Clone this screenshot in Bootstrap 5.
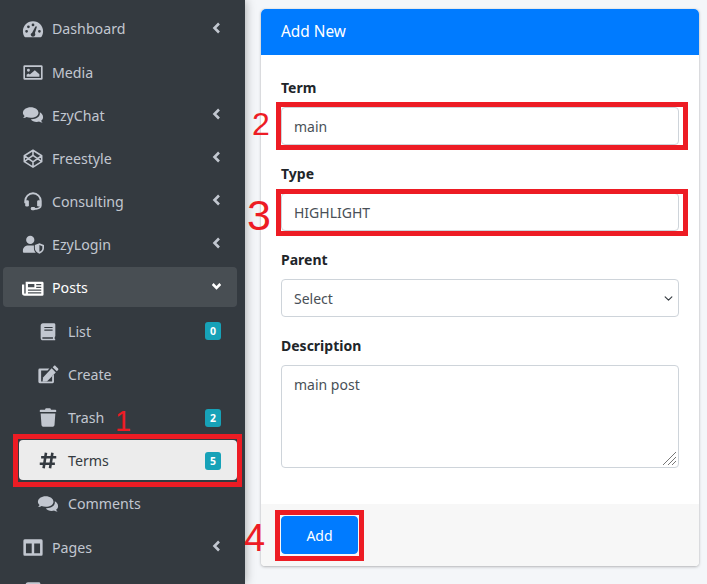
<!DOCTYPE html>
<html lang="en">
<head>
    <meta charset="UTF-8">
    <meta name="viewport" content="width=device-width, initial-scale=1">
    <title>Terms - Add New</title>
    <link href="https://cdn.jsdelivr.net/npm/bootstrap@5.3.0/dist/css/bootstrap.min.css" rel="stylesheet">
    <style>
        html, body { height: 584px; overflow: hidden; }
        body { background: #f4f6f9; font-family: "Noto Sans", "Liberation Sans", sans-serif; font-size: 14px; color: #212529; }
        .page-wrap { height: 584px; overflow: hidden; }

        /* sidebar */
        .side-bar { width: 245px; flex: none; background: #343a40; padding: 8px 8px 0 3px; box-shadow: 0 0 10px rgba(0,0,0,.35); height: 584px; overflow: hidden; z-index: 1; }
        .side-link { height: 40px; margin-bottom: 3.2px; padding: 2px 16px 0 17px; color: #c2c7d0; border-radius: 4px; font-size: 14.2px; }
        .side-link:hover { color: #c2c7d0; }
        .side-link.is-open { background: rgba(255,255,255,.1); color: #fff; }
        .side-link.is-sub { margin-left: 16px; }
        .side-link.is-current { background: #ececec; color: #343a40; }
        .side-ico { width: 22px; height: 19px; flex: none; margin-left: 2px; margin-right: 8px; fill: currentColor; }
        .is-sub .side-ico { margin-left: 1px; margin-right: 9px; }
        .side-arrow { width: 9px; height: 12px; flex: none; fill: none; stroke: currentColor; stroke-width: 2.6; margin-left: auto; margin-top: -3px; }
        .side-count { margin-left: auto; background: #17a2b8; color: #fff; font-size: 10.5px; font-weight: 700; width: 16px; height: 18px; padding: 0; line-height: 18px; border-radius: 3px; text-align: center; }

        /* form card */
        .main-area { padding: 9px 8px 0 16px; min-width: 0; }
        .form-box { border: 0; border-radius: 4px; box-shadow: 0 0 1px rgba(0,0,0,.2), 0 1px 3px rgba(0,0,0,.25); height: 557px; }
        .form-box .card-header { background: #007bff; color: #fff; height: 46px; padding: 0 20px; font-size: 15.4px; line-height: 46px; border: 0; }
        .form-box .card-body { padding: 20px; }
        .form-box .form-label { font-weight: 700; font-size: 14px; line-height: 23px; padding-top: 1px; margin-bottom: 8px; display: block; }
        .form-box .form-control, .form-box .form-select { font-size: 14px; color: #495057; height: 38px; border-color: #ced4da; border-radius: 4px; line-height: 24px; }
        .form-box .form-select, .form-box textarea.form-control { padding-top: 7px; padding-bottom: 5px; }
        .form-box .form-select { background-position: right 4px center; background-size: 11px 9px; }
        .form-box textarea.form-control { height: 103px; resize: none; background: url("data:image/svg+xml,%3Csvg xmlns='http://www.w3.org/2000/svg' width='14' height='14'%3E%3Cpath d='M1 14 14 1M6 14 14 6M10 14 14 10' stroke='%23777' stroke-width='1'/%3E%3C/svg%3E") no-repeat right 2px bottom 2px #fff; }
        .form-box .card-footer { background: #f7f7f7; border: 0; padding: 12px 20px; height: 62px; border-radius: 0 0 4px 4px; }
        .add-btn { background: #007bff; border-color: #007bff; font-size: 14px; padding: 0; height: 38px; width: 77px; border-radius: 4px; }

        /* red marks laid over the shot */
        .red-box { position: absolute; border: 5px solid #ed1c24; pointer-events: none; z-index: 2; }
        .box-terms { left: 13px; top: 434px; width: 229px; height: 53px; }
        .box-term { left: 276px; top: 102px; width: 412px; height: 48px; }
        .box-type { left: 276px; top: 189px; width: 412px; height: 47px; }
        .box-add { left: 275px; top: 510px; width: 89px; height: 51px; }
        .red-num { position: absolute; color: #ed1c24; font-family: "Liberation Sans", sans-serif; line-height: 1; z-index: 2; }
        .num-1 { left: 115px; top: 407px; font-size: 29px; }
        .num-2 { left: 252px; top: 108px; font-size: 32px; }
        .num-3 { left: 247px; top: 194px; font-size: 43px; }
        .num-4 { left: 244px; top: 519px; font-size: 38px; }
    </style>
</head>
<body>
<svg width="0" height="0" class="position-absolute">
    <symbol id="i-gauge" viewBox="0 0 24 20"><path fill-rule="evenodd" d="M12 1C5.5 1 1 6.2 1 12c0 2.2.6 4.300 1.700 6 .2.300.5.500.9.500h16.800c.4 0 .7-.2.900-.5 1.100-1.700 1.700-3.800 1.700-6C23 6.200 18.500 1 12 1zM5 13.500a1.500 1.500 0 1 1 0-3 1.500 1.500 0 0 1 0 3zm2-5a1.500 1.500 0 1 1 0-3 1.500 1.500 0 0 1 0 3zm5-2a1.500 1.500 0 1 1 0-3 1.500 1.500 0 0 1 0 3zm2.500 9.500a2.600 2.600 0 0 1-5 0c-.1-1 .5-1.900 1.400-2.300L14.500 7c.2-.5.700-.7 1.100-.5.500.2.700.6.500 1.100l-2 6.100c.4.600.5 1.500.4 2.300zM19 13.500a1.500 1.500 0 1 1 0-3 1.500 1.500 0 0 1 0 3z"/></symbol>
    <symbol id="i-image" viewBox="0 0 24 20"><path fill-rule="evenodd" d="M3 2h18a1.500 1.500 0 0 1 1.500 1.500v13A1.500 1.500 0 0 1 21 18H3a1.500 1.500 0 0 1-1.500-1.500v-13A1.500 1.500 0 0 1 3 2zm.3 2v12h17.400V4zM7 6a1.600 1.600 0 1 1 0 3.200A1.600 1.600 0 0 1 7 6zM5 14.500v-2l2-1.500 1.500 1.200L14 7.500l5 4.500v2.500z"/></symbol>
    <symbol id="i-comments" viewBox="0 0 24 20"><path d="M9.500 1C4.800 1 1 3.700 1 7c0 1.400.7 2.600 1.800 3.600-.4.900-1.200 1.700-1.700 2.200 1.300 0 2.800-.5 3.800-1.200 1.400.6 3 .9 4.600.9 4.700 0 8.500-2.200 8.500-5.500S14.200 1 9.500 1z"/><path d="M19.300 6.500c.2.300.2.700.2 1 0 3.800-4 6.500-9 6.500h-.9c1.300 1.800 3.600 3 6.400 3 1 0 1.900-.1 2.700-.4 1 .7 2.500 1.300 3.800 1.300-.5-.5-1.200-1.400-1.600-2.300 1.300-1 2.100-2.300 2.100-3.800 0-2.300-1.600-4.300-3.700-5.300z"/></symbol>
    <symbol id="i-cube" viewBox="0 0 24 20"><path fill="none" stroke="currentColor" stroke-width="1.700" stroke-linejoin="round" d="M12 1 21.500 7v6.500L12 19.500 2.500 13.500V7zM12 1v5.700M12 13.800v5.700M2.500 7 12 13.800 21.500 7M2.500 13.500 12 6.700l9.500 6.800"/></symbol>
    <symbol id="i-headset" viewBox="0 0 24 20"><path fill="none" stroke="currentColor" stroke-width="2" d="M3.500 12V9.500a8.500 8.500 0 0 1 17 0V14c0 2.500-2.500 4-5 4H12"/><rect x="3.500" y="8.500" width="4" height="7" rx="1.500"/><rect x="16.500" y="8.500" width="4" height="7" rx="1.500"/><rect x="9.500" y="16" width="5" height="3.500" rx="1.500"/></symbol>
    <symbol id="i-usershield" viewBox="0 0 24 20"><circle cx="9" cy="5" r="4.500"/><path d="M1 19v-2.500c0-3 2.500-5.500 5.500-5.500h5c.5 0 1 .1 1.500.2v3c0 2 .8 3.600 2 4.800H2a1 1 0 0 1-1-1z"/><path fill-rule="evenodd" d="M19 8.500l5 2v3.500c0 2.800-2.200 5-5 6-2.800-1-5-3.200-5-6v-3.500zm0 2v7.500c1.800-.8 3.200-2.200 3.200-4v-2.200z"/></symbol>
    <symbol id="i-news" viewBox="0 0 24 20"><path fill-rule="evenodd" d="M4 2.500h18.500a1.500 1.500 0 0 1 1 1.500v12.500a1.500 1.500 0 0 1-1.500 1.500H3a3 3 0 0 1-3-3V5.500h2.500V15c0 .4.400.7.800.6.400 0 .700-.3.700-.6zM6.500 5v3.500h7V5zm9 0v1.500H21V5zm0 3v1.500H21V8zm-9 3v1.500H21V11zm0 3v1.500H21V14z"/></symbol>
    <symbol id="i-book" viewBox="0 0 24 20"><path fill-rule="evenodd" d="M6.500 1h12c.8 0 1.500.7 1.500 1.500v12.500c0 .500-.3.900-.7 1.100v2.100c.4.100.7.300.7.800 0 .5-.4.500-.8.500H6.500C5 19.500 4 18.500 4 17V3.500C4 2.100 5 1 6.500 1zM8 5v1.300h9V5zm0 2.800v1.300h9V7.800zM6.500 16.300c-.5 0-.9.300-.9.800s.4.800.9.800H17.400v-1.600z"/></symbol>
    <symbol id="i-edit" viewBox="0 0 24 20"><path d="M20.200 0.600l2.800 2.800c.5.500.5 1.200 0 1.700l-1.400 1.400-4.500-4.500L18.500.6c.5-.5 1.200-.5 1.700 0z"/><path d="M16 3.300l4.500 4.500-9.700 9.700-4.700.5.500-4.800z"/><path d="M3 3.500h10.500l-2 2H4.500v12h12v-5.500l2-2V18a1.500 1.500 0 0 1-1.500 1.500H3A1.500 1.500 0 0 1 1.500 18V5A1.500 1.500 0 0 1 3 3.500z" fill-rule="evenodd"/></symbol>
    <symbol id="i-trash" viewBox="0 0 24 20"><path d="M9.500 0h5l.8 1.500H20c.6 0 1 .4 1 1v1c0 .3-.2.500-.5.500h-17c-.3 0-.5-.2-.5-.5v-1c0-.6.400-1 1-1h4.700z"/><path d="M4 5.500h16l-.9 12.800c0 .9-.8 1.700-1.700 1.700H6.600c-.9 0-1.700-.8-1.700-1.700z"/></symbol>
    <symbol id="i-hash" viewBox="0 0 24 20"><path fill="none" stroke="currentColor" stroke-width="2.800" d="M9.800 1.500 7.200 18.500M16.800 1.500 14.200 18.500M4.500 6.500H21M3 13.500h16.500"/></symbol>
    <symbol id="i-columns" viewBox="0 0 24 20"><path fill-rule="evenodd" d="M3.500 1h17A1.800 1.800 0 0 1 22.500 3v14a1.800 1.800 0 0 1-2 2h-17a1.800 1.800 0 0 1-2-2V3a1.800 1.800 0 0 1 2-2zm.8 4.500v10.800h6.300V5.500zm9 0v10.800h6.400V5.500z"/></symbol>
    <symbol id="i-left" viewBox="0 0 9 12"><path d="M7 1.500 2.500 6 7 10.500"/></symbol>
</svg>

<div class="page-wrap d-flex position-relative">
    <!-- Sidebar -->
    <aside class="side-bar">
        <nav class="nav flex-column flex-nowrap">
            <a class="nav-link side-link d-flex align-items-center" href="#"><svg class="side-ico"><use href="#i-gauge"/></svg>Dashboard<svg class="side-arrow"><use href="#i-left"/></svg></a>
            <a class="nav-link side-link d-flex align-items-center" href="#"><svg class="side-ico"><use href="#i-image"/></svg>Media</a>
            <a class="nav-link side-link d-flex align-items-center" href="#"><svg class="side-ico"><use href="#i-comments"/></svg>EzyChat<svg class="side-arrow"><use href="#i-left"/></svg></a>
            <a class="nav-link side-link d-flex align-items-center" href="#"><svg class="side-ico"><use href="#i-cube"/></svg>Freestyle<svg class="side-arrow"><use href="#i-left"/></svg></a>
            <a class="nav-link side-link d-flex align-items-center" href="#"><svg class="side-ico"><use href="#i-headset"/></svg>Consulting<svg class="side-arrow"><use href="#i-left"/></svg></a>
            <a class="nav-link side-link d-flex align-items-center" href="#"><svg class="side-ico"><use href="#i-usershield"/></svg>EzyLogin<svg class="side-arrow"><use href="#i-left"/></svg></a>
            <a class="nav-link side-link is-open d-flex align-items-center" href="#"><svg class="side-ico"><use href="#i-news"/></svg>Posts<svg class="side-arrow" viewBox="0 0 9 12"><path d="M.7 3 4.500 6.800 8.300 3"/></svg></a>
            <a class="nav-link side-link is-sub d-flex align-items-center" href="#"><svg class="side-ico"><use href="#i-book"/></svg>List<span class="badge side-count">0</span></a>
            <a class="nav-link side-link is-sub d-flex align-items-center" href="#"><svg class="side-ico"><use href="#i-edit"/></svg>Create</a>
            <a class="nav-link side-link is-sub d-flex align-items-center" href="#"><svg class="side-ico"><use href="#i-trash"/></svg>Trash<span class="badge side-count">2</span></a>
            <a class="nav-link side-link is-sub is-current d-flex align-items-center" href="#"><svg class="side-ico"><use href="#i-hash"/></svg>Terms<span class="badge side-count">5</span></a>
            <a class="nav-link side-link is-sub d-flex align-items-center" href="#"><svg class="side-ico"><use href="#i-comments"/></svg>Comments</a>
            <a class="nav-link side-link d-flex align-items-center" href="#"><svg class="side-ico"><use href="#i-columns"/></svg>Pages<svg class="side-arrow"><use href="#i-left"/></svg></a>
            <a class="nav-link side-link d-flex align-items-center" href="#" aria-label="More"><svg class="side-ico"><use href="#i-book"/></svg><span class="badge side-count"></span></a>
        </nav>
    </aside>

    <!-- Form -->
    <main class="main-area flex-grow-1">
        <div class="card form-box">
            <div class="card-header">Add New</div>
            <div class="card-body">
                <div class="mb-3">
                    <label class="form-label" for="term">Term</label>
                    <input class="form-control" id="term" type="text" value="main">
                </div>
                <div class="mb-3">
                    <label class="form-label" for="type">Type</label>
                    <input class="form-control" id="type" type="text" value="HIGHLIGHT">
                </div>
                <div class="mb-3">
                    <label class="form-label" for="parent">Parent</label>
                    <select class="form-select" id="parent"><option>Select</option></select>
                </div>
                <div class="mb-3">
                    <label class="form-label" for="desc">Description</label>
                    <textarea class="form-control" id="desc">main post</textarea>
                </div>
            </div>
            <div class="card-footer">
                <button class="btn btn-primary add-btn" type="button">Add</button>
            </div>
        </div>
    </main>

    <!-- Red marks -->
    <div class="red-box box-terms"></div>
    <div class="red-box box-term"></div>
    <div class="red-box box-type"></div>
    <div class="red-box box-add"></div>
    <span class="red-num num-1">1</span>
    <span class="red-num num-2">2</span>
    <span class="red-num num-3">3</span>
    <span class="red-num num-4">4</span>
</div>

<script src="https://cdn.jsdelivr.net/npm/bootstrap@5.3.0/dist/js/bootstrap.bundle.min.js"></script>
</body>
</html>
